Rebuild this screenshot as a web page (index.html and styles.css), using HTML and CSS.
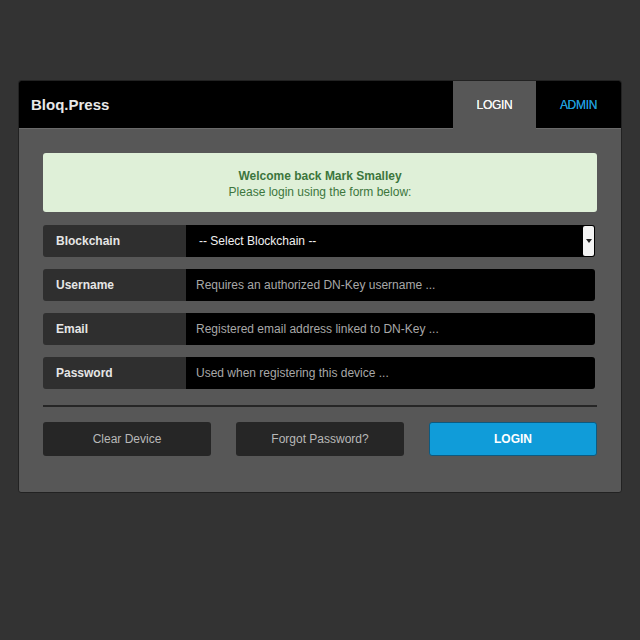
FILE: index.html
```html
<!DOCTYPE html>
<html>
<head>
<meta charset="utf-8">
<link rel="stylesheet" href="styles.css">
</head>
<body>
<div class="page">
  <div class="card">
    <div class="header">
      <div class="brand">Bloq.Press</div>
      <div class="tab active">LOGIN</div>
      <div class="tab admin">ADMIN</div>
    </div>
    <div class="body">
      <div class="alert">
        <div class="alert-title">Welcome back Mark Smalley</div>
        <div>Please login using the form below:</div>
      </div>
      <div class="rows">
        <div class="row">
          <div class="label">Blockchain</div>
          <div class="field select">
            <span class="value">-- Select Blockchain --</span>
            <span class="arrow"><svg width="6" height="4" viewBox="0 0 6 4"><path d="M0 0h6L3 4z" fill="#222"/></svg></span>
          </div>
        </div>
        <div class="row">
          <div class="label">Username</div>
          <div class="field">Requires an authorized DN-Key username ...</div>
        </div>
        <div class="row">
          <div class="label">Email</div>
          <div class="field">Registered email address linked to DN-Key ...</div>
        </div>
        <div class="row">
          <div class="label">Password</div>
          <div class="field">Used when registering this device ...</div>
        </div>
      </div>
      <div class="divider"></div>
      <div class="buttons">
        <div class="btn">Clear Device</div>
        <div class="btn">Forgot Password?</div>
        <div class="btn primary">LOGIN</div>
      </div>
    </div>
  </div>
</div>
</body>
</html>
```
FILE: styles.css
```css
html, body {
  margin: 0;
  padding: 0;
  background: #333333;
  font-family: "Liberation Sans", Arial, sans-serif;
}
.page {
  padding: 80px 18px 0 18px;
}
.card {
  width: 602px;
  border: 1px solid #222;
  border-radius: 3px;
  overflow: hidden;
  background: #575757;
}
.header {
  display: flex;
  height: 47px;
  background: #000;
  border-bottom: 1px solid #6a6a6a;
}
.brand {
  flex: 1;
  display: flex;
  align-items: center;
  padding-left: 12px;
  color: #e8e8e8;
  font-size: 15px;
  font-weight: bold;
}
.tab {
  display: flex;
  align-items: center;
  justify-content: center;
  font-size: 12px;
  letter-spacing: -0.3px;
}
.tab.active {
  width: 83px;
  background: #575757;
  color: #f6f6f6;
  height: 48px;
  text-shadow: 0 0 0.4px #fff;
}
.tab.admin {
  width: 85px;
  color: #1f9ad8;
  text-shadow: 0 0 0.4px #1f9ad8;
}
.body {
  padding: 24px 24px 36px 24px;
}
.alert {
  height: 59px;
  box-sizing: border-box;
  background: #dff0d8;
  border-radius: 3px;
  color: #3c763d;
  font-size: 12px;
  text-align: center;
  padding-top: 15px;
  line-height: 16px;
}
.alert-title {
  font-weight: bold;
}
.rows {
  margin-top: 13px;
  margin-right: 2px;
  display: flex;
  flex-direction: column;
  gap: 12px;
}
.row {
  display: flex;
  height: 32px;
  border-radius: 3px;
  overflow: hidden;
}
.label {
  width: 130px;
  padding-left: 13px;
  background: #2f2f2f;
  color: #e6e6e6;
  font-size: 12px;
  font-weight: bold;
  display: flex;
  align-items: center;
}
.field {
  flex: 1;
  background: #000;
  color: #a8a8a8;
  font-size: 12px;
  display: flex;
  align-items: center;
  padding-left: 10px;
}
.field.select {
  color: #f0f0f0;
  padding-right: 1px;
}
.field.select .value {
  flex: 1;
  padding-left: 3px;
}
.arrow {
  width: 11px;
  height: 30px;
  background: #f4f4f4;
  border-radius: 2px;
  display: flex;
  align-items: center;
  justify-content: center;
}
.divider {
  margin-top: 16px;
  height: 2px;
  background: #262626;
}
.buttons {
  margin-top: 15px;
  display: grid;
  grid-template-columns: repeat(3, 1fr);
  gap: 25px;
}
.btn {
  height: 34px;
  border-radius: 3px;
  background: #262626;
  color: #b8b8b8;
  font-size: 12px;
  display: flex;
  align-items: center;
  justify-content: center;
}
.btn.primary {
  background: #109cd9;
  border: 1px solid #0d5a80;
  box-sizing: border-box;
  color: #fff;
  font-weight: bold;
}
```
